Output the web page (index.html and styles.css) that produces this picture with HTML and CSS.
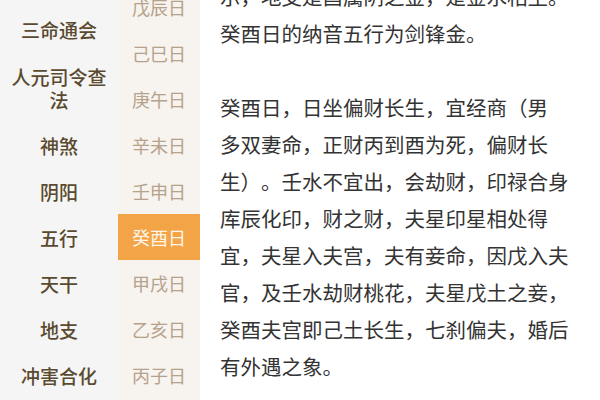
FILE: index.html
```html
<!DOCTYPE html>
<html lang="zh-CN">
<head>
<meta charset="utf-8">
<title>癸酉日</title>
<link rel="stylesheet" href="styles.css">
</head>
<body>
<div class="page">
  <nav class="cats">
    <ul class="cat-list">
      <li class="cat">三命通会</li>
      <li class="cat multi">人元司令查法</li>
      <li class="cat">神煞</li>
      <li class="cat">阴阳</li>
      <li class="cat">五行</li>
      <li class="cat">天干</li>
      <li class="cat">地支</li>
      <li class="cat">冲害合化</li>
    </ul>
  </nav>
  <nav class="days">
    <ul class="day-list">
      <li class="day">戊辰日</li>
      <li class="day">己巳日</li>
      <li class="day">庚午日</li>
      <li class="day">辛未日</li>
      <li class="day">壬申日</li>
      <li class="day active">癸酉日</li>
      <li class="day">甲戌日</li>
      <li class="day">乙亥日</li>
      <li class="day">丙子日</li>
    </ul>
  </nav>
  <main class="content">
    <div class="article">
      <p>示，地支是酉属阴之金，是金水相生。癸酉日的纳音五行为剑锋金。</p>
      <p>癸酉日，日坐偏财长生，宜经商（男<br>多双妻命，正财丙到酉为死，偏财长生）。壬水不宜出，会劫财，印禄合身库辰化印，财之财，夫星印星相处得宜，夫星入夫宫，夫有妾命，因戊入夫官，及壬水劫财桃花，夫星戊土之妾，癸酉夫宫即己土长生，七刹偏夫，婚后有外遇之象。</p>
    </div>
  </main>
</div>
</body>
</html>
```

FILE: styles.css
```css
html, body {
  margin: 0;
  padding: 0;
  background: #ffffff;
}
body {
  font-family: "Noto Sans CJK SC", "Noto Sans", sans-serif;
  overflow: hidden;
  text-spacing-trim: space-all;
}
.page {
  display: flex;
  width: 600px;
  height: 400px;
  overflow: hidden;
}
ul {
  list-style: none;
  margin: 0;
  padding: 0;
}
.cats {
  width: 118px;
  flex: none;
  background: #f5f5f5;
  overflow: hidden;
}
.cat-list {
  padding-top: 7px;
}
.cat {
  padding: 12px 10px;
  font-size: 19px;
  line-height: 22px;
  font-weight: 500;
  color: #5a4a2f;
  text-align: center;
}
.cat.multi {
  line-height: 23px;
}
.days {
  width: 82px;
  flex: none;
  background: #f7f3ef;
  overflow: hidden;
}
.day-list {
  margin-top: -16px;
}
.day {
  height: 46px;
  display: flex;
  align-items: center;
  justify-content: center;
  font-size: 18px;
  color: #b6a28b;
}
.day.active {
  background: #f2a447;
  color: #fff6e8;
}
.content {
  flex: 1;
  overflow: hidden;
  padding: 0 30px 0 20px;
}
.article {
  margin-top: -22px;
  font-size: 20.5px;
  line-height: 37px;
  color: #333333;
  text-spacing-trim: space-all;
}
.article p {
  margin: 0 0 37px;
}
```
